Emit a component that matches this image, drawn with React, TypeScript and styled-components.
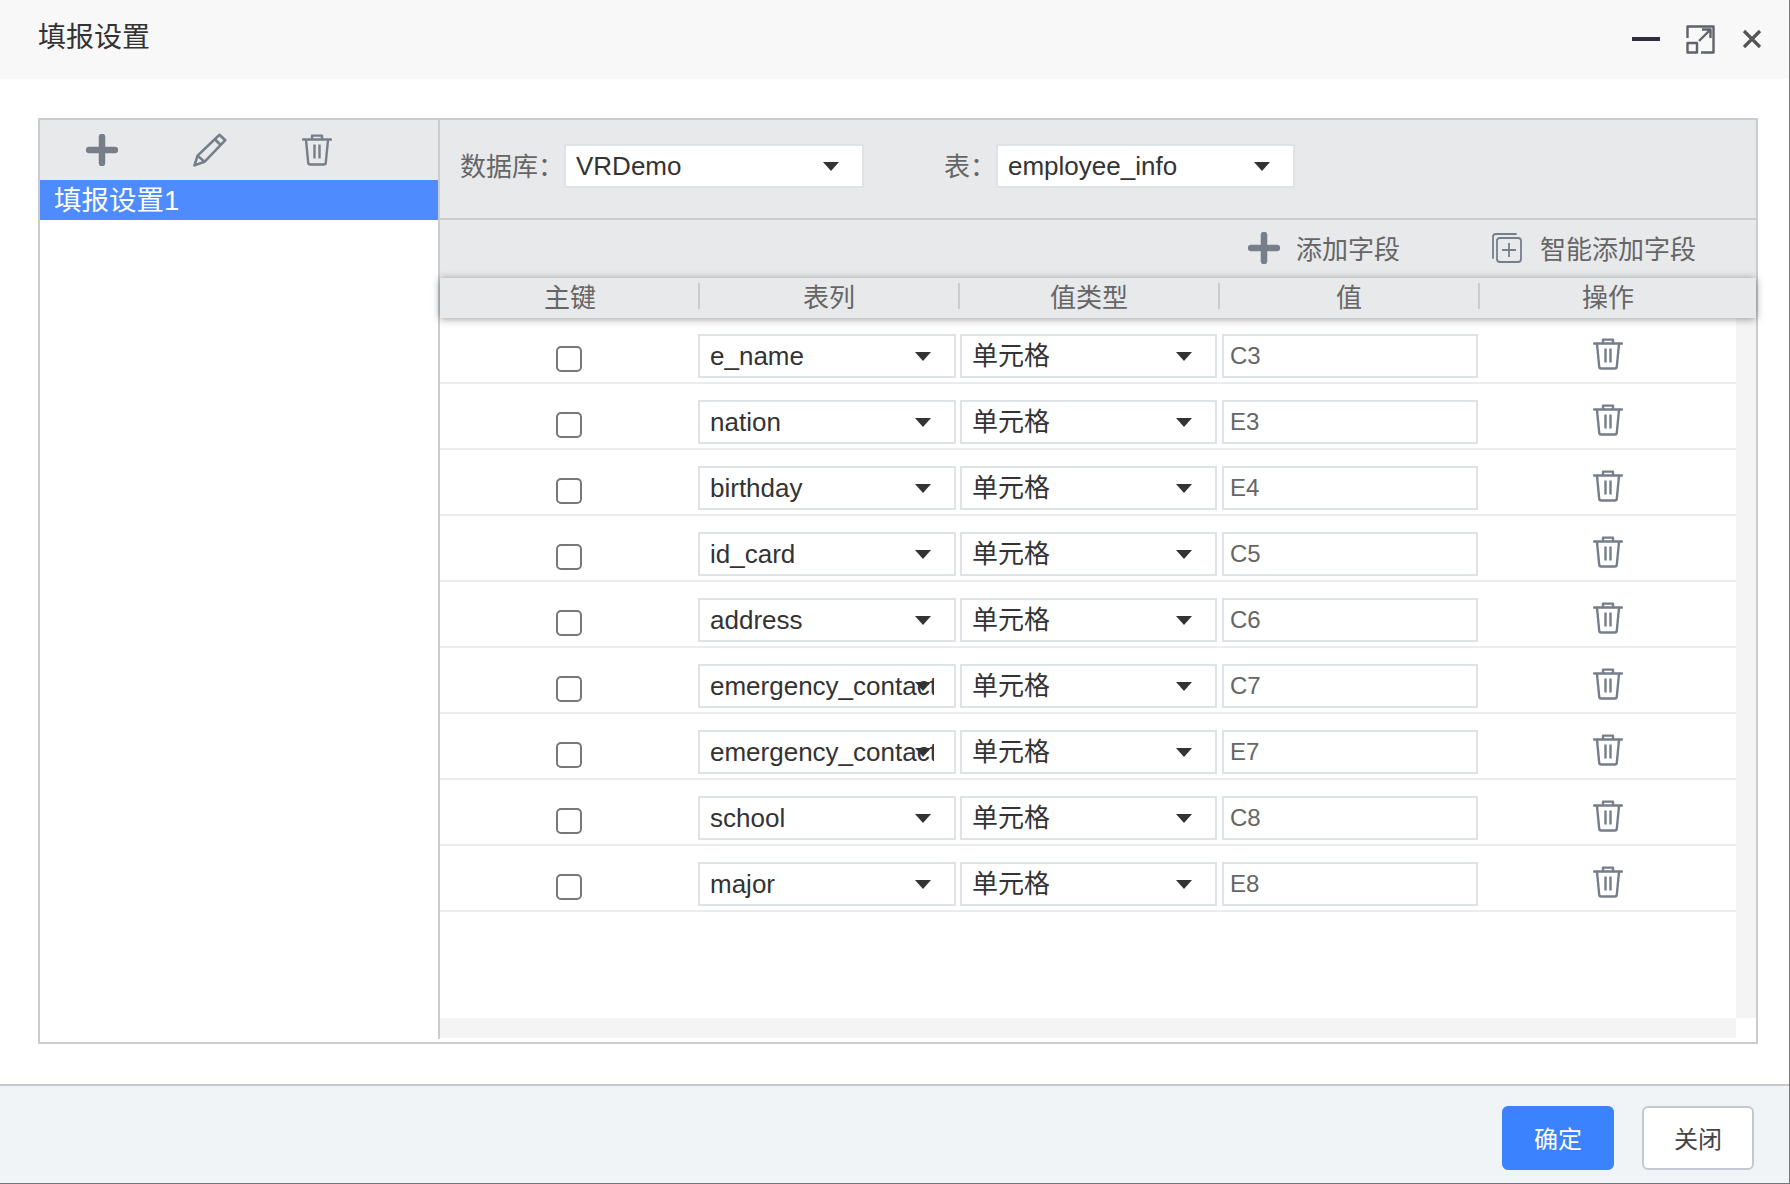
import React from 'react';
import styled, { createGlobalStyle } from 'styled-components';

const GlobalStyle = createGlobalStyle`
  html, body {
    margin: 0;
    padding: 0;
    background: #fff;
  }
  body {
    font-family: "Liberation Sans", "Noto Sans CJK SC", sans-serif;
  }
  * {
    box-sizing: border-box;
  }
`;

const Dialog = styled.div`
  width: 1790px;
  height: 1184px;
  display: flex;
  flex-direction: column;
  background: #fff;
  border-right: 1px solid #777;
  border-bottom: 1px solid #777;
`;

const TitleBar = styled.div`
  height: 79px;
  flex: none;
  display: flex;
  align-items: center;
  padding: 0 27px 1px 38px;
  background: #f8f8f8;
`;

const Title = styled.div`
  flex: 1;
  padding-bottom: 8px;
  font-size: 28px;
  color: #333;
`;

const WindowButtons = styled.div`
  display: flex;
  align-items: center;
  gap: 26px;
`;

const Content = styled.div`
  flex: 1;
  padding: 39px 31px 40px 38px;
  min-height: 0;
`;

const Frame = styled.div`
  height: 100%;
  display: flex;
  border: 2px solid #ccc;
`;

const Sidebar = styled.div`
  width: 400px;
  flex: none;
  border-right: 2px solid #ccc;
  margin-bottom: 3px;
`;

const SideTools = styled.div`
  height: 60px;
  display: flex;
  align-items: center;
  padding: 0 0 1px 46px;
  gap: 75px;
  background: #e8e9eb;
`;

const SideItem = styled.div`
  height: 40px;
  line-height: 42px;
  padding-left: 14px;
  font-size: 27.5px;
  color: #fff;
  background: #4d8bff;
`;

const Main = styled.div`
  flex: 1;
  min-width: 0;
  display: flex;
  flex-direction: column;
`;

const SourceBar = styled.div`
  height: 100px;
  flex: none;
  display: flex;
  align-items: flex-start;
  padding: 24px 0 0 20px;
  background: #e8e9eb;
  border-bottom: 2px solid #ccc;
`;

const SourceLabel = styled.div<{ $width: number }>`
  width: ${p => p.$width}px;
  height: 44px;
  line-height: 46px;
  font-size: 26px;
  color: #666;
  white-space: nowrap;
`;

const Field = styled.div<{ $width: number; $marginRight?: number }>`
  position: relative;
  width: ${p => p.$width}px;
  height: 44px;
  flex: none;
  display: flex;
  align-items: center;
  margin-right: ${p => p.$marginRight || 0}px;
  padding: 0 20px 0 10px;
  background: #fff;
  border: 2px solid #dfe3e8;
  font-size: 26px;
  color: #333;
`;

const FieldText = styled.div<{ $cjk?: boolean }>`
  flex: 1;
  min-width: 0;
  margin-top: ${p => (p.$cjk ? -5 : 0)}px;
  overflow: hidden;
  white-space: nowrap;
`;

const Caret = styled.span`
  position: absolute;
  top: 50%;
  right: 23px;
  margin-top: -4px;
  width: 0;
  height: 0;
  border-left: 8px solid transparent;
  border-right: 8px solid transparent;
  border-top: 9px solid #333;
`;

const ValueField = styled.div`
  width: 256px;
  height: 44px;
  line-height: 40px;
  padding-left: 6px;
  background: #fff;
  border: 2px solid #dfe3e8;
  font-size: 24px;
  color: #666;
`;

const FieldTools = styled.div`
  height: 58px;
  flex: none;
  display: flex;
  align-items: center;
  padding: 0 60px 3px 0;
  background: #e8e9eb;
  justify-content: flex-end;
`;

const ToolButton = styled.div<{ $marginLeft?: number; $gap: number }>`
  display: flex;
  align-items: center;
  gap: ${p => p.$gap}px;
  margin-left: ${p => p.$marginLeft || 0}px;
  font-size: 26px;
  color: #666;
`;

const TableHead = styled.div`
  position: relative;
  z-index: 1;
  height: 40px;
  flex: none;
  display: grid;
  grid-template-columns: 258px 260px 260px 260px 258px;
  padding-top: 5px;
  background: #e8e9eb;
  box-shadow: 0 1px 8px rgba(0, 0, 0, 0.4);
`;

const HeadCell = styled.div<{ $first?: boolean }>`
  height: 26px;
  line-height: 30px;
  text-align: center;
  font-size: 26px;
  color: #666;
  border-left: 2px solid ${p => (p.$first ? 'transparent' : '#ccc')};
`;

const Scroller = styled.div`
  height: 700px;
  flex: none;
  display: flex;
`;

const Rows = styled.div`
  flex: 1;
  min-width: 0;
`;

const VerticalBar = styled.div`
  width: 20px;
  flex: none;
  background: #f4f4f4;
`;

const HorizontalBar = styled.div`
  height: 20px;
  flex: none;
  margin-right: 20px;
  background: #f4f4f4;
`;

const Row = styled.div`
  height: 66px;
  display: grid;
  grid-template-columns: 258px 262px 262px 257px 1fr;
  align-items: start;
  padding-top: 16px;
  border-bottom: 2px solid #ececec;
`;

const CheckCell = styled.div`
  display: flex;
  justify-content: center;
  padding: 12px 1px 0 0;
`;

const CheckBox = styled.span`
  width: 26px;
  height: 26px;
  background: #fff;
  border: 2px solid #777;
  border-radius: 5px;
`;

const ActionCell = styled.div`
  display: flex;
  justify-content: center;
  padding-top: 4px;
`;

const Footer = styled.div`
  height: 99px;
  flex: none;
  display: flex;
  justify-content: flex-end;
  align-items: flex-start;
  gap: 28px;
  padding: 20px 35px 0 0;
  background: #f0f4f7;
  border-top: 2px solid #c8c8c8;
`;

const Button = styled.div<{ $primary?: boolean }>`
  width: 112px;
  height: 64px;
  display: flex;
  align-items: center;
  justify-content: center;
  padding-bottom: 2px;
  font-size: 24px;
  border-radius: 6px;
  color: ${p => (p.$primary ? '#fff' : '#444')};
  background: ${p => (p.$primary ? '#3b82ff' : '#fff')};
  border: 2px solid ${p => (p.$primary ? '#3b82ff' : '#c4c9d0')};
`;

const CloseGlyph = styled.svg`
  margin-left: 1px;
`;

const iconColor = '#767e8a';

const PlusIcon = () => (
  <svg width="32" height="32" viewBox="0 0 32 32" fill="none">
    <path d="M16 3v26M3 16h26" stroke={iconColor} strokeWidth="6.5" strokeLinecap="round" />
  </svg>
);

const PencilIcon = () => (
  <svg width="34" height="34" viewBox="0 0 34 34" fill="none" stroke={iconColor} strokeWidth="2.6" strokeLinejoin="round">
    <path d="M26.5 1.8 32.3 7.2 11.5 28.8 1.5 32.4 4.6 22.6Z" />
    <path d="M4.6 22.6 11.5 28.8" />
    <path d="M22 6.5 28 12.2" />
  </svg>
);

const TrashIcon = () => (
  <svg width="30" height="32" viewBox="0 0 30 32" fill="none" stroke={iconColor} strokeWidth="2.4" strokeLinejoin="round">
    <path d="M1 5.5h28" strokeLinecap="round" />
    <path d="M10 5V1.6h10V5" />
    <path d="M4 6l2.2 22.6a2 2 0 0 0 2 1.9h13.6a2 2 0 0 0 2-1.9L26 6" />
    <path d="M12.5 10.5v14M17.5 10.5v14" />
  </svg>
);

const SmartAddIcon = () => (
  <svg width="30" height="30" viewBox="0 0 30 30" fill="none" stroke={iconColor} strokeWidth="1.8">
    <path d="M24 1H4a3 3 0 0 0-3 3v21" strokeLinecap="round" />
    <rect x="5" y="5" width="24" height="24" rx="3" />
    <path d="M17 10v14M10 17h14" />
  </svg>
);

const ExpandIcon = () => (
  <svg width="29" height="29" viewBox="0 0 29 29" fill="none" stroke="#5f6268" strokeWidth="2.4" strokeLinejoin="round">
    <path d="M1.5 13V1.5h26v26H15" />
    <rect x="1.5" y="18" width="9.5" height="9.5" />
    <path d="M13 16 24 5M16 4.5h8.5V13" />
  </svg>
);

const MinimizeIcon = () => (
  <svg width="28" height="4" viewBox="0 0 28 4">
    <rect width="28" height="4" fill="#2d2d3f" />
  </svg>
);

const CloseIcon = () => (
  <CloseGlyph width="20" height="20" viewBox="0 0 20 20" fill="none">
    <path d="M2 2l16 16M18 2 2 18" stroke="#555" strokeWidth="3.2" />
  </CloseGlyph>
);

const fields = [
  { column: 'e_name', cell: 'C3' },
  { column: 'nation', cell: 'E3' },
  { column: 'birthday', cell: 'E4' },
  { column: 'id_card', cell: 'C5' },
  { column: 'address', cell: 'C6' },
  { column: 'emergency_contact', cell: 'C7' },
  { column: 'emergency_contact_tel', cell: 'E7' },
  { column: 'school', cell: 'C8' },
  { column: 'major', cell: 'E8' },
];

const heads = ['主键', '表列', '值类型', '值', '操作'];

export default function App() {
  return (
    <Dialog>
      <GlobalStyle />
      <TitleBar>
        <Title>填报设置</Title>
        <WindowButtons>
          <MinimizeIcon />
          <ExpandIcon />
          <CloseIcon />
        </WindowButtons>
      </TitleBar>
      <Content>
        <Frame>
          <Sidebar>
            <SideTools>
              <PlusIcon />
              <PencilIcon />
              <TrashIcon />
            </SideTools>
            <SideItem>填报设置1</SideItem>
          </Sidebar>
          <Main>
            <SourceBar>
              <SourceLabel $width={104}>数据库：</SourceLabel>
              <Field $width={300} $marginRight={80}>
                <FieldText>VRDemo</FieldText>
                <Caret />
              </Field>
              <SourceLabel $width={52}>表：</SourceLabel>
              <Field $width={299}>
                <FieldText>employee_info</FieldText>
                <Caret />
              </Field>
            </SourceBar>
            <FieldTools>
              <ToolButton $gap={16}>
                <PlusIcon />
                添加字段
              </ToolButton>
              <ToolButton $gap={18} $marginLeft={92}>
                <SmartAddIcon />
                智能添加字段
              </ToolButton>
            </FieldTools>
            <TableHead>
              {heads.map((head, i) => (
                <HeadCell key={head} $first={i === 0}>
                  {head}
                </HeadCell>
              ))}
            </TableHead>
            <Scroller>
              <Rows>
                {fields.map(field => (
                  <Row key={field.column}>
                    <CheckCell>
                      <CheckBox />
                    </CheckCell>
                    <Field $width={257.5}>
                      <FieldText>{field.column}</FieldText>
                      <Caret />
                    </Field>
                    <Field $width={257}>
                      <FieldText $cjk>单元格</FieldText>
                      <Caret />
                    </Field>
                    <ValueField>{field.cell}</ValueField>
                    <ActionCell>
                      <TrashIcon />
                    </ActionCell>
                  </Row>
                ))}
              </Rows>
              <VerticalBar />
            </Scroller>
            <HorizontalBar />
          </Main>
        </Frame>
      </Content>
      <Footer>
        <Button $primary>确定</Button>
        <Button>关闭</Button>
      </Footer>
    </Dialog>
  );
}
